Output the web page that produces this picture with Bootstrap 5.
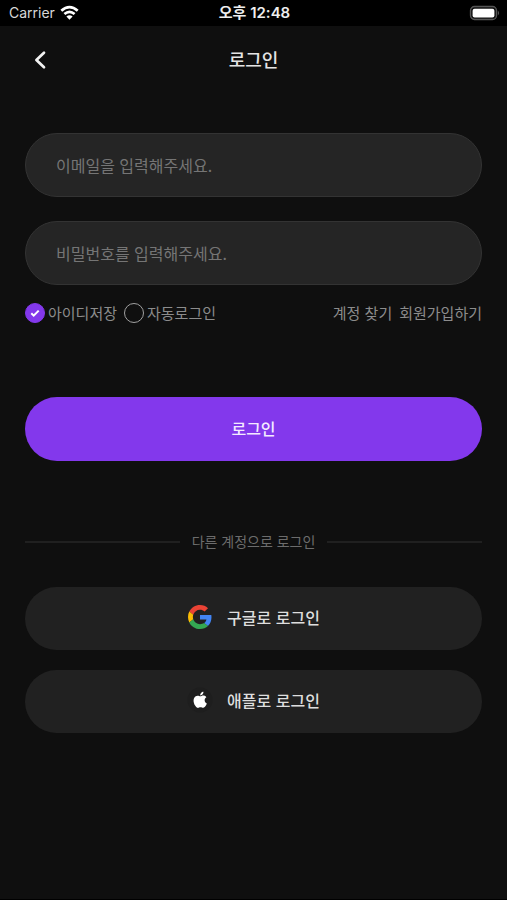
<!DOCTYPE html>
<html lang="ko">
<head>
<meta charset="utf-8">
<meta name="viewport" content="width=device-width, initial-scale=1">
<title>로그인</title>
<link href="https://cdn.jsdelivr.net/npm/bootstrap@5.3.0/dist/css/bootstrap.min.css" rel="stylesheet">
<style>
body{background:#0f0f0f;color:#e4e4e4;font-family:"Noto Sans CJK KR",sans-serif;font-size:16px;border-bottom:1px solid #000}
.status-bar{background:#000;height:26px;padding:0 7px 0 9px;font-family:Inter,"Noto Sans CJK KR",sans-serif;font-size:14px;line-height:26px;color:#d8d8d8}
.status-bar>*{flex:1 1 0}
.status-time{font-size:15px;font-weight:600;color:#eee}
.title-bar{height:67px;padding:0 25px}
.title-bar>*{flex:1 1 0}
.title-bar h1{font-size:18px;font-weight:500;line-height:28px;padding-bottom:2px}
.back-btn{width:30px;height:30px}
.login-main{padding:40px 25px}
.field{height:64px;background:#252525;border:1px solid #333;color:#e4e4e4;font-size:16px;line-height:32px;padding:0 30px}
.field:focus{background:#252525;color:#e4e4e4;border-color:#8338ec;box-shadow:none}
.field::placeholder{color:#757575;line-height:32px}
.options{font-size:15px;line-height:22px;color:#8c8c8c;margin-top:17px}
.options a{color:#8c8c8c}
.options .round-check{width:20px;height:20px;margin:0;background-color:transparent;border:1px solid #a0a0a0;border-radius:50%}
.options .round-check:checked{background-color:#8338ec;border-color:#8338ec;background-size:14px;background-image:url("data:image/svg+xml,%3Csvg xmlns='http://www.w3.org/2000/svg' viewBox='0 0 14 14'%3E%3Cpath d='M3.3 7.3l2.4 2.3 5-5' fill='none' stroke='white' stroke-width='2'/%3E%3C/svg%3E")}
.options .form-check-label{margin-left:3px}
.options .link-group{gap:7px}
.wide-btn{height:64px;font-size:16px;font-weight:500;padding:0 12px 3px}
.login-btn,.login-btn:hover{background:#8338ec;color:#f4eaff;margin-top:73px}
.divider{color:#6c6c6c;font-size:14px;line-height:22px;margin:69px 0 33px;gap:12px}
.divider span{padding-bottom:2px}
.divider hr{border-top:2px solid #202020;opacity:1}
.social-list{gap:20px}
.social-btn,.social-btn:hover{height:63px;background:#212121;color:#dedede}
.social-icon{width:26px;height:26px;margin-right:14px}
</style>
</head>
<body class="min-vh-100">
<div class="status-bar d-flex align-items-center">
  <div class="d-flex align-items-center gap-1">
    <span>Carrier</span>
    <svg width="21" height="16" viewBox="0 0 20 16" fill="none" stroke="#fff" stroke-width="2.7" aria-hidden="true"><path d="M1.8 5.7Q10-1.6 18.2 5.7M4.9 9.1Q10 4.7 15.1 9.1"/><path d="M10 14.8L6.9 11.5Q10 8.9 13.1 11.5Z" fill="#fff" stroke="none"/></svg>
  </div>
  <div class="status-time text-center">오후 12:48</div>
  <div class="d-flex justify-content-end">
    <svg width="31" height="16" viewBox="0 0 31 16" aria-hidden="true"><rect x="1.5" y="1.5" width="26" height="13" rx="4" fill="#111" stroke="#555" stroke-width="1.3"/><rect x="3.6" y="3.7" width="21.8" height="8.8" rx="2" fill="#fff"/><path d="M28.8 5.6q2.6 2.4 0 4.8z" fill="#555"/></svg>
  </div>
</div>
<header class="title-bar d-flex align-items-center">
  <div>
    <button type="button" class="back-btn btn p-0 border-0 d-flex align-items-center justify-content-center" aria-label="뒤로">
      <svg width="14" height="20" viewBox="0 0 14 20" fill="none" stroke="#f2f2f2" stroke-width="2.7" stroke-linecap="round" stroke-linejoin="round"><path d="M11 2.7L3.4 10l7.6 7.3"/></svg>
    </button>
  </div>
  <h1 class="text-center mb-0">로그인</h1>
  <div></div>
</header>
<main class="login-main">
  <form>
    <input id="email" type="email" aria-label="이메일" class="field form-control rounded-pill mb-4" placeholder="이메일을 입력해주세요.">
    <input id="password" type="password" aria-label="비밀번호" class="field form-control rounded-pill" placeholder="비밀번호를 입력해주세요.">
    <div class="options d-flex flex-wrap justify-content-between">
      <div class="link-group d-flex">
        <div class="d-flex align-items-center"><input id="save-id" type="checkbox" class="round-check form-check-input" checked><label class="form-check-label" for="save-id">아이디저장</label></div>
        <div class="d-flex align-items-center"><input id="auto-login" type="checkbox" class="round-check form-check-input"><label class="form-check-label" for="auto-login">자동로그인</label></div>
      </div>
      <div class="link-group d-flex">
        <a class="text-decoration-none" href="#">계정 찾기</a>
        <a class="text-decoration-none" href="#">회원가입하기</a>
      </div>
    </div>
    <button type="submit" class="login-btn wide-btn btn border-0 rounded-pill w-100">로그인</button>
  </form>
  <div class="divider d-flex align-items-center">
    <hr class="flex-grow-1 m-0"><span>다른 계정으로 로그인</span><hr class="flex-grow-1 m-0">
  </div>
  <div class="social-list d-grid">
    <button type="button" class="social-btn wide-btn btn border-0 rounded-pill d-flex align-items-center justify-content-center">
      <svg class="social-icon" viewBox="-2 -2 52 52" aria-hidden="true"><path fill="#EA4335" d="M24 9.5c3.54 0 6.71 1.22 9.21 3.6l6.85-6.85C35.9 2.38 30.47 0 24 0 14.62 0 6.51 5.38 2.56 13.22l7.98 6.19C12.43 13.72 17.74 9.5 24 9.5z"/><path fill="#4285F4" d="M46.98 24.55c0-1.57-.15-3.09-.38-4.55H24v9.02h12.94c-.58 2.96-2.26 5.48-4.78 7.18l7.73 6c4.51-4.18 7.09-10.36 7.09-17.65z"/><path fill="#FBBC05" d="M10.53 28.59c-.48-1.45-.76-2.99-.76-4.59s.27-3.14.76-4.59l-7.98-6.19C.92 16.46 0 20.12 0 24c0 3.88.92 7.54 2.56 10.78z"/><path fill="#34A853" d="M24 48c6.48 0 11.93-2.13 15.89-5.81l-7.73-6c-2.15 1.45-4.92 2.3-8.16 2.3-6.26 0-11.57-4.22-13.47-9.91l-7.98 6.19C6.51 42.62 14.62 48 24 48z"/></svg>
      <span>구글로 로그인</span>
    </button>
    <button type="button" class="social-btn wide-btn btn border-0 rounded-pill d-flex align-items-center justify-content-center">
      <svg class="social-icon" viewBox="0 0 26 26" aria-hidden="true"><circle cx="13" cy="13" r="12.5" fill="#1e1e1e"/><g transform="translate(5 4) scale(.74)"><path fill="#fff" d="M17.05 12.54c-.03-2.76 2.25-4.09 2.36-4.15-1.29-1.88-3.29-2.14-4-2.17-1.7-.17-3.32 1-4.19 1-.86 0-2.2-.98-3.61-.95-1.86.03-3.57 1.08-4.53 2.74-1.93 3.35-.49 8.31 1.39 11.03.92 1.33 2.02 2.83 3.46 2.77 1.39-.06 1.91-.9 3.59-.9s2.15.9 3.62.87c1.49-.03 2.44-1.36 3.35-2.7 1.06-1.54 1.49-3.04 1.52-3.12-.03-.01-2.93-1.12-2.96-4.42z"/><path fill="#fff" d="M14.3 4.42c.76-.93 1.28-2.21 1.14-3.49-1.1.04-2.43.73-3.22 1.65-.71.82-1.33 2.13-1.16 3.38 1.22.1 2.47-.62 3.24-1.54z"/></g></svg>
      <span>애플로 로그인</span>
    </button>
  </div>
</main>
<script src="https://cdn.jsdelivr.net/npm/bootstrap@5.3.0/dist/js/bootstrap.bundle.min.js"></script>
</body>
</html>
